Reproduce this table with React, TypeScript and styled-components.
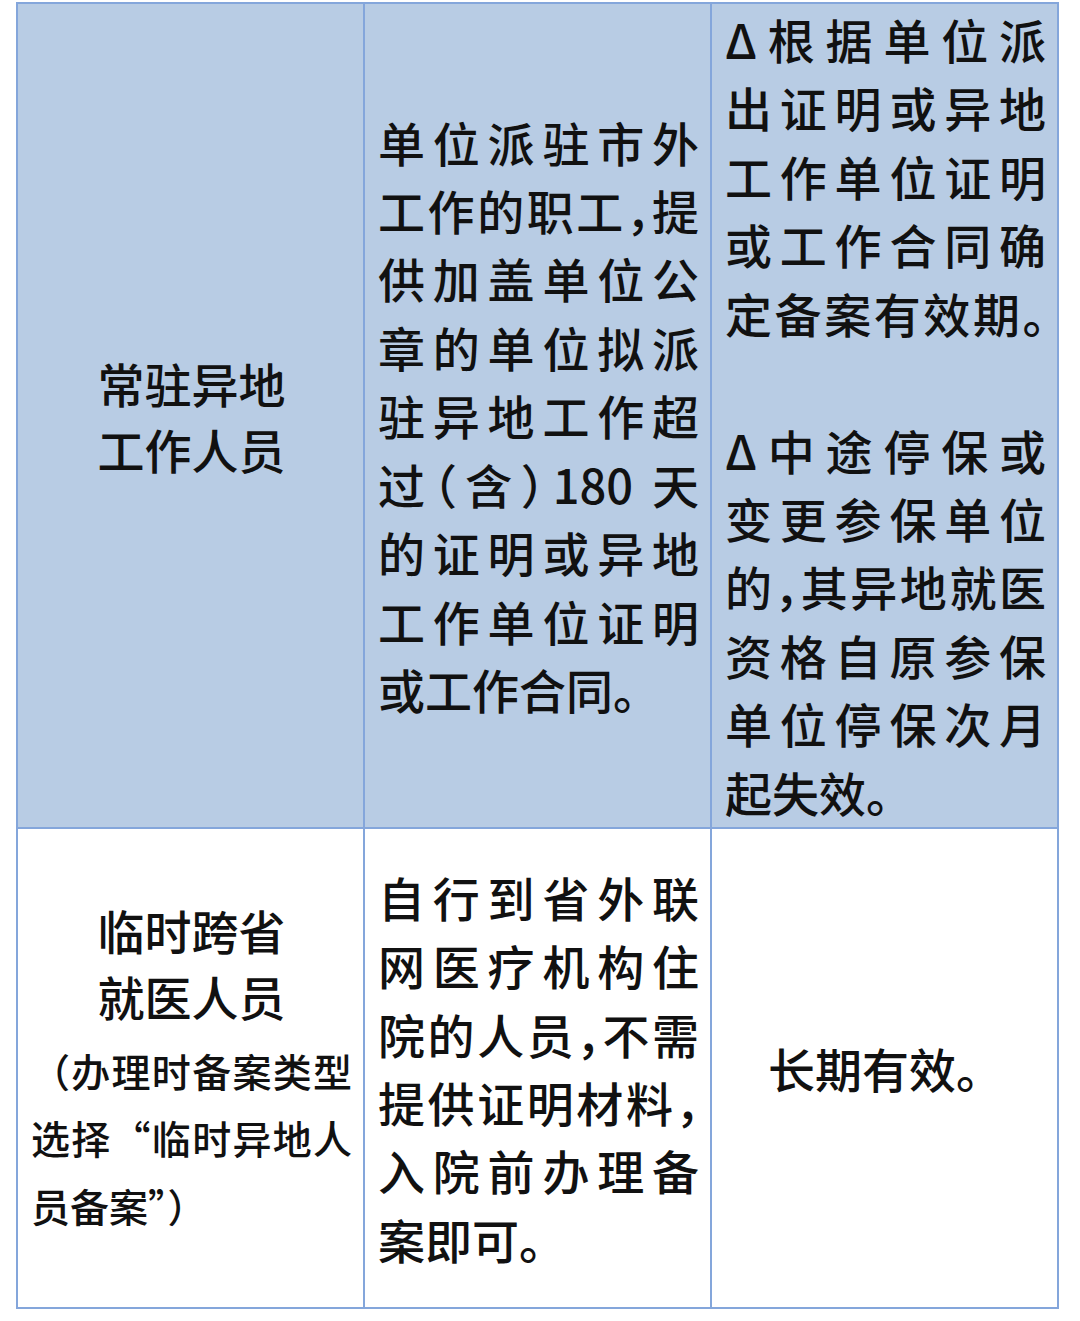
import { createGlobalStyle, styled } from 'styled-components';

type Size = 'big' | 'title' | 'note';

type Block = {
  lines: string[];
  size?: Size;
  // spread lines to the full width; the last one stays as is unless fillLast
  justify?: boolean;
  fillLast?: boolean;
};

type CellData = {
  blocks: Block[];
  center?: boolean;
};

type RowData = {
  height: number;
  shaded: boolean;
  cells: CellData[];
};

const rows: RowData[] = [
  {
    height: 825,
    shaded: true,
    cells: [
      { center: true, blocks: [{ size: 'title', lines: ['常驻异地', '工作人员'] }] },
      {
        blocks: [
          {
            justify: true,
            lines: [
              '单位派驻市外',
              '工作的职工，提',
              '供加盖单位公',
              '章的单位拟派',
              '驻异地工作超',
              '过（含）180 天',
              '的证明或异地',
              '工作单位证明',
              '或工作合同。',
            ],
          },
        ],
      },
      {
        blocks: [
          {
            justify: true,
            fillLast: true,
            lines: ['Δ根据单位派', '出证明或异地', '工作单位证明', '或工作合同确', '定备案有效期。'],
          },
          { lines: [''] },
          {
            justify: true,
            lines: ['Δ中途停保或', '变更参保单位', '的，其异地就医', '资格自原参保', '单位停保次月', '起失效。'],
          },
        ],
      },
    ],
  },
  {
    height: 480,
    shaded: false,
    cells: [
      {
        blocks: [
          { size: 'title', lines: ['临时跨省', '就医人员'] },
          { size: 'note', justify: true, lines: ['（办理时备案类型', '选择“临时异地人', '员备案”）'] },
        ],
      },
      {
        blocks: [
          {
            justify: true,
            lines: ['自行到省外联', '网医疗机构住', '院的人员，不需', '提供证明材料，', '入院前办理备', '案即可。'],
          },
        ],
      },
      { center: true, blocks: [{ lines: ['长期有效。'] }] },
    ],
  },
];

// punctuation in a spread body line is set half width, as the source does
function renderLine(line: string, squeeze: boolean) {
  if (!line) return '\u00a0';
  if (!squeeze) return line;
  return line
    .split(/([，。（）])/)
    .map((part, i) => ('，。（）'.includes(part) && part ? <Punct key={i}>{part}</Punct> : part));
}

function App() {
  return (
    <>
      <GlobalStyle />
      <Page>
        <Table>
          {rows.map((row, r) =>
            row.cells.map((cell, c) => (
              <Cell key={`${r}-${c}`} $shaded={row.shaded} $height={row.height} $center={cell.center}>
                {cell.blocks.map((block, b) => {
                  const size = block.size || 'big';
                  return (
                    <Paragraph key={b} $size={size}>
                      {block.lines.map((line, i) => {
                        const fill = !!block.justify && (i < block.lines.length - 1 || !!block.fillLast);
                        return (
                          <Line key={i} $fill={fill}>
                            {renderLine(line, fill && size === 'big')}
                          </Line>
                        );
                      })}
                    </Paragraph>
                  );
                })}
              </Cell>
            )),
          )}
        </Table>
      </Page>
    </>
  );
}

const GlobalStyle = createGlobalStyle`
  html, body {
    margin: 0;
    padding: 0;
    background: #ffffff;
  }

  body {
    font-family: "Noto Sans CJK SC", "Noto Sans", sans-serif;
    font-weight: 500;
    color: #111111;
  }
`;

const Page = styled.div`
  width: 1080px;
  height: 1321px;
  padding: 2px 0 0 16px;
  box-sizing: border-box;
`;

const Table = styled.div`
  display: grid;
  grid-template-columns: repeat(3, 347px);
  width: max-content;
  border-top: 2px solid #84a6db;
  border-left: 2px solid #84a6db;
`;

const Cell = styled.div<{ $shaded: boolean; $height: number; $center?: boolean }>`
  display: flex;
  flex-direction: column;
  justify-content: center;
  box-sizing: border-box;
  height: ${(p) => p.$height}px;
  padding: 0 11px 0 13px;
  border-right: 2px solid #84a6db;
  border-bottom: 2px solid #84a6db;
  background-color: ${(p) => (p.$shaded ? '#b8cce4' : '#ffffff')};
  text-align: ${(p) => (p.$center ? 'center' : 'left')};
`;

const sizes = {
  big: { font: 47, line: 68.4 },
  title: { font: 47, line: 66 },
  note: { font: 39, line: 67.5 },
};

const Paragraph = styled.div<{ $size: Size }>`
  font-size: ${(p) => sizes[p.$size].font}px;
  line-height: ${(p) => sizes[p.$size].line}px;
  text-align: ${(p) => (p.$size === 'title' ? 'center' : 'inherit')};
  margin-top: ${(p) => (p.$size === 'note' ? '8px' : '0')};
`;

const Line = styled.div<{ $fill: boolean }>`
  white-space: nowrap;
  text-align: ${(p) => (p.$fill ? 'justify' : 'inherit')};
  text-align-last: ${(p) => (p.$fill ? 'justify' : 'auto')};
  text-justify: inter-character;
`;

const Punct = styled.span`
  font-feature-settings: 'halt' 1;
`;

export default App;
